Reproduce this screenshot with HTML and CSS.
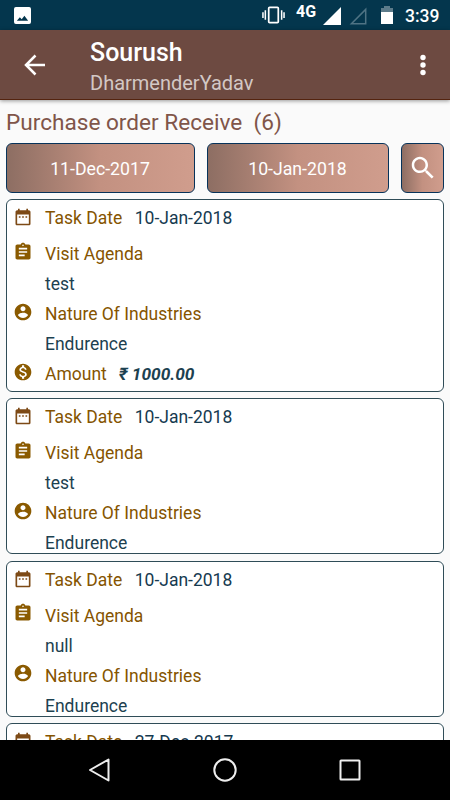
FILE: index.html
```html
<!DOCTYPE html>
<html lang="en">
<head>
    <meta charset="utf-8">
    <title>Purchase order Receive</title>
    <link rel="stylesheet" href="styles.css">
</head>
<body>
    <svg class="icon-defs">
        <symbol id="calendar" viewBox="0 0 24 24"><path d="M9 11H7v2h2v-2zm4 0h-2v2h2v-2zm4 0h-2v2h2v-2zm2-7h-1V2h-2v2H8V2H6v2H5c-1.11 0-1.99.9-1.99 2L3 20c0 1.1.89 2 2 2h14c1.1 0 2-.9 2-2V6c0-1.1-.9-2-2-2zm0 16H5V9h14v11z"/></symbol>
        <symbol id="clipboard" viewBox="0 0 24 24"><path d="M19 3h-4.18C14.4 1.84 13.3 1 12 1c-1.3 0-2.4.84-2.82 2H5c-1.1 0-2 .9-2 2v14c0 1.1.9 2 2 2h14c1.1 0 2-.9 2-2V5c0-1.1-.9-2-2-2zm-7 0c.55 0 1 .45 1 1s-.45 1-1 1-1-.45-1-1 .45-1 1-1zm2 14H7v-2h7v2zm3-4H7v-2h10v2zm0-4H7V7h10v2z"/></symbol>
        <symbol id="account" viewBox="0 0 24 24"><path d="M12 2C6.48 2 2 6.48 2 12s4.48 10 10 10 10-4.48 10-10S17.52 2 12 2zm0 3c1.66 0 3 1.34 3 3s-1.34 3-3 3-3-1.34-3-3 1.34-3 3-3zm0 14.2c-2.5 0-4.71-1.28-6-3.22.03-1.99 4-3.08 6-3.08 1.99 0 5.97 1.09 6 3.08-1.29 1.94-3.5 3.22-6 3.22z"/></symbol>
        <symbol id="money" viewBox="0 0 24 24"><path d="M12 2C6.48 2 2 6.48 2 12s4.48 10 10 10 10-4.48 10-10S17.52 2 12 2zm1.41 16.09V20h-2.67v-1.93c-1.71-.36-3.16-1.46-3.27-3.4h1.96c.1 1.05.82 1.87 2.65 1.87 1.96 0 2.4-.98 2.4-1.59 0-.83-.44-1.61-2.67-2.14-2.48-.6-4.18-1.62-4.18-3.67 0-1.72 1.39-2.84 3.11-3.21V4h2.67v1.95c1.86.45 2.79 1.86 2.85 3.39H14.3c-.05-1.11-.64-1.87-2.22-1.87-1.5 0-2.4.68-2.4 1.64 0 .84.65 1.39 2.67 1.91s4.18 1.39 4.18 3.91c-.01 1.83-1.38 2.83-3.12 3.16z"/></symbol>
    </svg>

    <div class="status-bar">
        <svg class="status-picture" viewBox="0 0 18 18"><rect width="18" height="18" rx="2" fill="#fff"/><path d="M3 14.5L6.2 10.8L8.2 13L11 9.3L15 14.5z" fill="#04364d"/></svg>
        <svg class="status-vibrate" viewBox="0 0 24 18"><path d="M1 6v6M3.5 4v10M20.5 4v10M23 6v6" stroke="#fff" stroke-width="1.6"/><rect x="7" y="1" width="10" height="16" rx="1" fill="none" stroke="#fff" stroke-width="1.8"/></svg>
        <span class="network">4G</span>
        <svg class="signal" viewBox="0 0 18 18"><path d="M18 0v18H0z" fill="#fff"/></svg>
        <svg class="signal" viewBox="0 0 18 18"><path d="M16.7 2.4v14.3H2.4z" fill="none" stroke="#4f7384" stroke-width="1.5"/></svg>
        <svg class="battery" viewBox="0 0 12 18"><path d="M3 0h6v2h3v4H0V2h3z" fill="#5c7b8a"/><path d="M0 6h12v12H0z" fill="#fff"/></svg>
        <span class="clock">3:39</span>
    </div>

    <div class="toolbar">
        <svg class="back" viewBox="0 0 30 30"><path d="M25 15H6M15.5 5.5L6 15L15.5 24.5" fill="none" stroke="#fff" stroke-width="2.5"/></svg>
        <div class="titles">
            <div class="title">Sourush</div>
            <div class="subtitle">DharmenderYadav</div>
        </div>
        <svg class="more" viewBox="0 0 6 22"><circle cx="3" cy="3.5" r="2.7"/><circle cx="3" cy="11" r="2.7"/><circle cx="3" cy="18.5" r="2.7"/></svg>
    </div>

    <div class="content">
        <div class="heading">Purchase order Receive&nbsp; (6)</div>
        <div class="filters">
            <button class="filter date-from">11-Dec-2017</button>
            <button class="filter date-to">10-Jan-2018</button>
            <button class="filter search">
                <svg viewBox="0 0 24 24"><path d="M15.5 14h-.79l-.28-.27C15.41 12.59 16 11.11 16 9.5 16 5.91 13.09 3 9.5 3S3 5.91 3 9.5 5.91 16 9.5 16c1.61 0 3.09-.59 4.23-1.57l.27.28v.79l5 4.99L20.49 19l-4.99-5zm-6 0C7.01 14 5 11.99 5 9.5S7.01 5 9.5 5 14 7.01 14 9.5 11.99 14 9.5 14z"/></svg>
            </button>
        </div>

        <div class="orders">
            <div class="order order-full">
                <div class="row row-date"><svg class="icon"><use href="#calendar"/></svg><span class="label">Task Date</span><span class="value">10-Jan-2018</span></div>
                <div class="row"><svg class="icon"><use href="#clipboard"/></svg><span class="label">Visit Agenda</span></div>
                <div class="row detail">test</div>
                <div class="row"><svg class="icon"><use href="#account"/></svg><span class="label">Nature Of Industries</span></div>
                <div class="row detail">Endurence</div>
                <div class="row"><svg class="icon"><use href="#money"/></svg><span class="label">Amount</span><span class="value amount">₹ 1000.00</span></div>
            </div>
            <div class="order">
                <div class="row row-date"><svg class="icon"><use href="#calendar"/></svg><span class="label">Task Date</span><span class="value">10-Jan-2018</span></div>
                <div class="row"><svg class="icon"><use href="#clipboard"/></svg><span class="label">Visit Agenda</span></div>
                <div class="row detail">test</div>
                <div class="row"><svg class="icon"><use href="#account"/></svg><span class="label">Nature Of Industries</span></div>
                <div class="row detail">Endurence</div>
            </div>
            <div class="order">
                <div class="row row-date"><svg class="icon"><use href="#calendar"/></svg><span class="label">Task Date</span><span class="value">10-Jan-2018</span></div>
                <div class="row"><svg class="icon"><use href="#clipboard"/></svg><span class="label">Visit Agenda</span></div>
                <div class="row detail">null</div>
                <div class="row"><svg class="icon"><use href="#account"/></svg><span class="label">Nature Of Industries</span></div>
                <div class="row detail">Endurence</div>
            </div>
            <div class="order">
                <div class="row row-date"><svg class="icon"><use href="#calendar"/></svg><span class="label">Task Date</span><span class="value">27-Dec-2017</span></div>
            </div>
        </div>
    </div>

    <div class="nav-bar">
        <svg viewBox="0 0 24 24"><path d="M20.5 1.5v21L2 12z"/></svg>
        <svg viewBox="0 0 24 24"><circle cx="12" cy="12" r="10.7"/></svg>
        <svg viewBox="0 0 24 24"><rect x="2.5" y="2.5" width="19" height="19" rx="0.5"/></svg>
    </div>
</body>
</html>
```
FILE: styles.css
```css
* {
    box-sizing: border-box;
}
body {
    margin: 0;
    height: 800px;
    display: flex;
    flex-direction: column;
    overflow: hidden;
    font-family: Roboto, sans-serif;
    font-size: 17.5px;
    background: #fafafa;
}
svg {
    display: block;
    flex: none;
}
.icon-defs {
    display: none;
}
.status-bar {
    display: flex;
    flex: none;
    align-items: center;
    height: 30px;
    padding: 0 10px 0 14px;
    background: #04364d;
    color: #fff;
}
.status-picture {
    width: 17px;
    height: 17px;
}
.status-vibrate {
    width: 23px;
    height: 18px;
    margin-left: auto;
    margin-right: 11px;
}
.network {
    width: 27px;
    margin-bottom: 6px;
    font-size: 16px;
    font-weight: 700;
    line-height: 16px;
}
.signal {
    width: 18px;
    height: 18px;
    margin-top: 2px;
    margin-right: 8px;
}
.battery {
    width: 12px;
    height: 18px;
    margin-left: 6px;
    margin-right: 12px;
}
.clock {
    width: 35px;
    padding-top: 1px;
    font-size: 17.5px;
    font-weight: 500;
    white-space: nowrap;
}
.toolbar {
    position: relative;
    display: flex;
    flex: none;
    align-items: center;
    height: 70px;
    padding: 0 24px 0 20px;
    background: #6d4a41;
    border-bottom: 1px solid #54240f;
    box-shadow: 0 1px 4px rgba(0, 0, 0, 0.4);
    color: #fff;
}
.back {
    width: 30px;
    height: 30px;
}
.titles {
    flex: 1;
    margin-left: 40px;
    padding-top: 7px;
}
.title {
    font-size: 25px;
    font-weight: 500;
    line-height: 30px;
}
.subtitle {
    font-size: 20px;
    line-height: 30px;
    color: #d3c8c5;
}
.more {
    width: 6px;
    height: 22px;
    fill: #fff;
}
.content {
    flex: 1;
    min-height: 0;
    padding: 6px 6px 0;
    overflow: hidden;
}
.heading {
    height: 37px;
    font-size: 22.6px;
    line-height: 33px;
    color: #805549;
}
.filters {
    display: flex;
    height: 50px;
}
.filter {
    display: flex;
    align-items: center;
    justify-content: center;
    padding: 1px 1px 0 0;
    border: 1px solid #07335a;
    border-radius: 6px;
    background: linear-gradient(90deg, #8d6e63, #c39181 50%, #d09d8d);
    color: #fff;
    font-family: inherit;
    font-size: 17.7px;
}
.date-from {
    width: 189px;
    margin-right: 12px;
}
.date-to {
    width: 182px;
    margin-right: 12px;
}
.search {
    width: 43px;
    padding: 0;
}
.search svg {
    width: 30px;
    height: 30px;
    fill: #fff;
}
.orders {
    display: flex;
    flex-direction: column;
    gap: 6.5px;
    margin-top: 6px;
}
.order {
    flex: none;
    width: 438px;
    height: 156px;
    padding: 3px 6px 0;
    border: 1px solid #2f4c57;
    border-radius: 6px;
    background: #fff;
    overflow: hidden;
}
.order-full {
    height: 192.5px;
}
.row {
    display: flex;
    height: 30px;
    line-height: 31px;
    white-space: pre;
}
.row-date {
    margin-bottom: 6px;
}
.icon {
    width: 20px;
    height: 20px;
    margin-top: 2.5px;
    margin-left: -0.5px;
    margin-right: 12.5px;
    fill: #8a5a00;
}
.row-date .icon {
    margin-top: 4px;
    fill: #7d4a16;
}
.label {
    color: #855400;
}
.value {
    margin-left: 12.5px;
    color: #163a50;
}
.detail {
    padding-left: 32px;
    color: #1c4150;
}
.amount {
    margin-left: 12px;
    font-size: 17.3px;
    font-weight: 700;
    font-style: italic;
    color: #1c4150;
}
.nav-bar {
    display: flex;
    flex: none;
    justify-content: center;
    align-items: center;
    gap: 101px;
    height: 60px;
    background: #000;
}
.nav-bar svg {
    width: 24px;
    height: 24px;
    fill: none;
    stroke: #eee;
    stroke-width: 2;
    stroke-linejoin: round;
}
```
